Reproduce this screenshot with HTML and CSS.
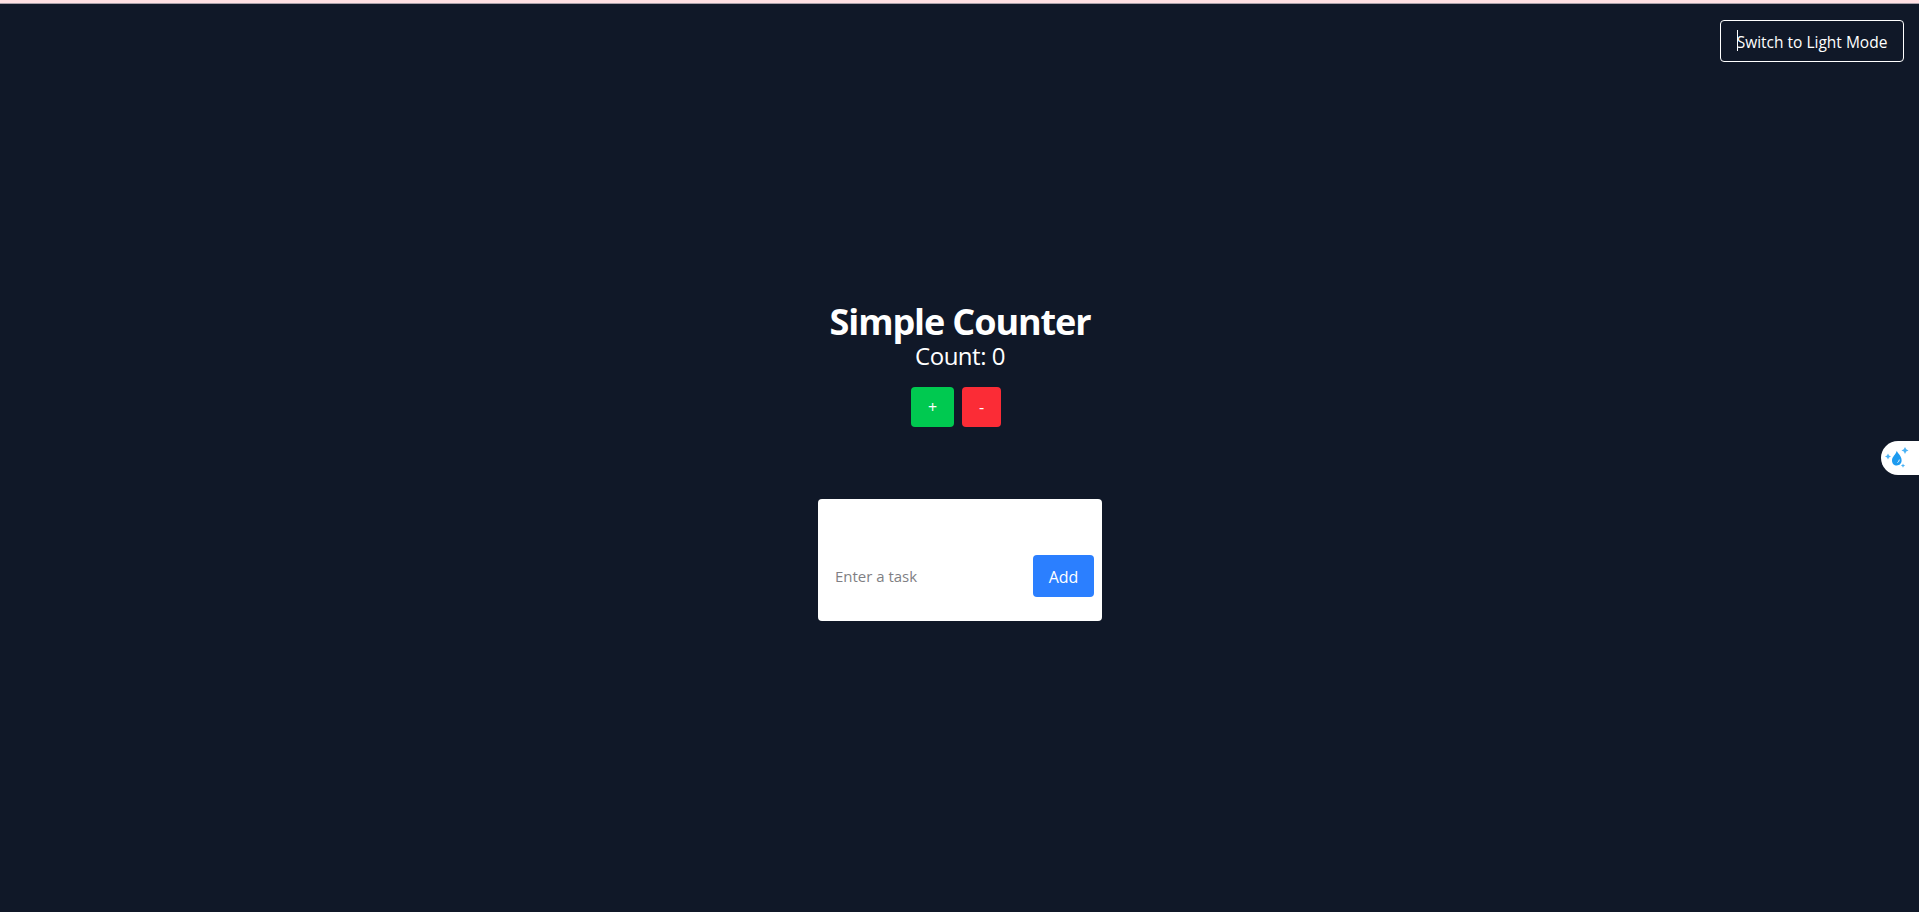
FILE: index.html
```html
<!DOCTYPE html>
<html lang="en">
<head>
<meta charset="utf-8">
<title>Simple Counter</title>
<link rel="stylesheet" href="styles.css">
</head>
<body>
<div class="app">
  <header class="topbar">
    <button class="mode-toggle"><span class="caret"></span><span class="mode-label">Switch to Light Mode</span></button>
  </header>
  <main class="content">
    <h1 class="title">Simple Counter</h1>
    <p class="count">Count: 0</p>
    <div class="counter-actions">
      <button class="btn increment">+</button>
      <button class="btn decrement">-</button>
    </div>
    <section class="todo-card">
      <form class="todo-form">
        <input class="task-input" type="text" placeholder="Enter a task">
        <button class="add-btn" type="button">Add</button>
      </form>
    </section>
  </main>
  <aside class="side-widget">
    <svg width="24" height="24" viewBox="0 0 24 24" fill="#1d9bf0">
      <path d="M11.8 4.8C12.6 7.6 16.6 9.8 16.6 14.2C16.6 17.4 14.6 19.4 11.8 19.4C9 19.4 7 17.4 7 14.4C7 10.7 11 8.6 11.8 4.8Z"/>
      <path d="M12.4 16.5Q14.2 15.8 14.3 13.6" fill="none" stroke="#fff" stroke-width="0.9"/>
      <g fill="#4bb3f6">
        <path d="M20 .9L21.2 3.2L23.5 4.4L21.2 5.6L20 7.9L18.8 5.6L16.5 4.4L18.8 3.2Z"/>
        <path d="M3 7.4L4 9.4L6 10.4L4 11.4L3 13.4L2 11.4L0 10.4L2 9.4Z"/>
        <path d="M18 17.4L18.7 18.9L20.2 19.6L18.7 20.3L18 21.8L17.3 20.3L15.8 19.6L17.3 18.9Z"/>
      </g>
    </svg>
  </aside>
</div>
</body>
</html>
```
FILE: styles.css
```css
* { box-sizing: border-box; margin: 0; padding: 0; }

body {
  background: #101828;
  color: #fff;
  font-family: "Open Sans", "Noto Sans", sans-serif;
  font-size: 16px;
  line-height: 24px;
  overflow: hidden;
}

button, input { font: inherit; color: inherit; border: 0; }

.app {
  position: relative;
  height: 912px;
  border-top: 3px solid #ffe0e3;
  box-shadow: inset 0 1px 0 #a9a0a9;
}

.topbar {
  display: flex;
  justify-content: flex-end;
  padding: 17px 15px 0 0;
}

.mode-toggle {
  position: relative;
  width: 184px;
  height: 42px;
  padding-top: 1px;
  border: 1px solid #fff;
  border-radius: 4px;
  background: transparent;
  white-space: nowrap;
  font-size: 15.5px;
}

.caret {
  position: absolute;
  left: 16px;
  top: 9px;
  width: 1px;
  height: 21px;
  background: #fff;
}

.content {
  display: flex;
  flex-direction: column;
  align-items: center;
  padding: 240px 0 0 1px;
}

.title {
  font-size: 36px;
  line-height: 40px;
  font-weight: 700;
  letter-spacing: -1.1px;
  white-space: nowrap;
}

.count {
  font-size: 24px;
  line-height: 28px;
  letter-spacing: -0.5px;
}

.counter-actions {
  display: flex;
  gap: 8px;
  margin: 17px 8px 0 0;
}

.btn {
  height: 40px;
  border-radius: 4px;
  font-size: 16px;
}

.increment { width: 43px; background: #00c950; }
.decrement { width: 39px; background: #fb2c36; }

.todo-card {
  width: 284px;
  height: 122px;
  margin-top: 72px;
  padding: 56px 8px 0;
  border-radius: 4px;
  background: #fff;
}

.todo-form { display: flex; justify-content: space-between; }

.task-input {
  width: 190px;
  height: 42px;
  padding-left: 9px;
  background: transparent;
  font-size: 15px;
  letter-spacing: -0.02px;
  outline: none;
}

.task-input::placeholder { color: #7f7f84; opacity: 1; }

.add-btn {
  width: 61px;
  height: 42px;
  padding-top: 1px;
  border-radius: 4px;
  background: #2b7fff;
}

.side-widget {
  position: absolute;
  right: 0;
  top: 438px;
  width: 38px;
  height: 34px;
  padding: 5px 0 0 4px;
  border-radius: 17px 0 0 17px;
  background: #fff;
  line-height: 0;
}
```
